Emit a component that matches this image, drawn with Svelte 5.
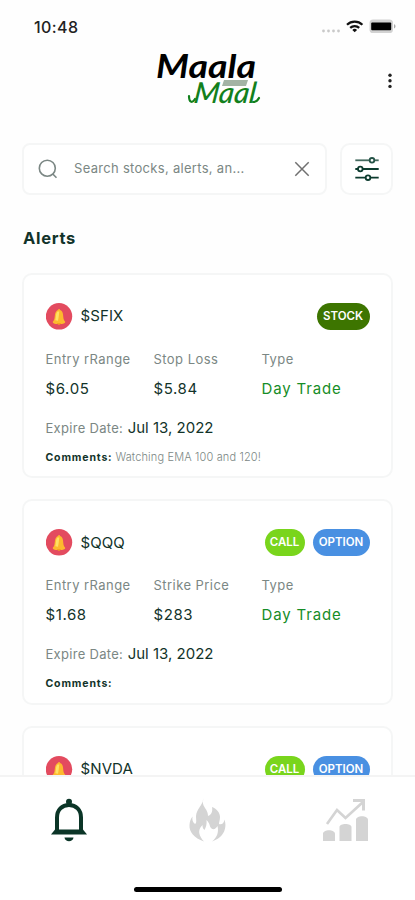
<script lang="ts">
	type Tag = 'stock' | 'call' | 'option';

	interface Alert {
		symbol: string;
		tags: Tag[];
		fields: { label: string; value: string; green?: boolean }[];
		expires: string;
		comments: string;
	}

	const alerts: Alert[] = [
		{
			symbol: '$SFIX',
			tags: ['stock'],
			fields: [
				{ label: 'Entry rRange', value: '$6.05' },
				{ label: 'Stop Loss', value: '$5.84' },
				{ label: 'Type', value: 'Day Trade', green: true }
			],
			expires: 'Jul 13, 2022',
			comments: 'Watching EMA 100 and 120!'
		},
		{
			symbol: '$QQQ',
			tags: ['call', 'option'],
			fields: [
				{ label: 'Entry rRange', value: '$1.68' },
				{ label: 'Strike Price', value: '$283' },
				{ label: 'Type', value: 'Day Trade', green: true }
			],
			expires: 'Jul 13, 2022',
			comments: ''
		},
		{
			symbol: '$NVDA',
			tags: ['call', 'option'],
			fields: [],
			expires: '',
			comments: ''
		}
	];
</script>

<div class="screen">
	<div class="status-bar">
		<span class="time">10:48</span>
		<svg class="status-icons" width="76" height="16" viewBox="0 0 76 16">
			<g fill="#c9c9c9">
				<circle cx="3.5" cy="12" r="1.4" />
				<circle cx="8.5" cy="12" r="1.4" />
				<circle cx="13.5" cy="12" r="1.4" />
				<circle cx="18.5" cy="12" r="1.4" />
			</g>
			<g fill="none" stroke="#111" stroke-width="2.2">
				<path d="M27 5.7a11 11 0 0 1 15.4 0" />
				<path d="M30.2 8.9a6.4 6.4 0 0 1 9 0" />
			</g>
			<path d="M34.7 13.2l-2.4-2.3a3.4 3.4 0 0 1 4.8 0z" fill="#111" />
			<rect x="49.5" y="0.5" width="23.5" height="13.5" rx="3.6" fill="#d2d2d2" />
			<rect x="51.2" y="3.4" width="20" height="7.8" rx="1" fill="#000" />
			<path d="M74 5.2c2 .6 2 3.6 0 4.2z" fill="#aaa" />
		</svg>
	</div>

	<header class="top">
		<svg class="logo" width="112" height="60" viewBox="0 0 112 60">
			<text class="logo-main" x="4" y="26" textLength="100" lengthAdjust="spacingAndGlyphs">Maala</text>
			<path d="M72 28h24l-2 6h-24z" fill="#a3b3a5" />
			<g transform="translate(37 50.5) skewX(-7)">
				<text class="logo-sub" x="4" y="0" textLength="62" lengthAdjust="spacingAndGlyphs">Maal</text>
			</g>
			<!-- swashes on both ends of the script line -->
			<g fill="none" stroke="#12801c" stroke-width="2.2" stroke-linecap="round">
				<path d="M37 44c0 6 3 8 6 3" />
				<path d="M101 50c3 0 5-2 6-4" />
			</g>
		</svg>
		<svg class="more" width="6" height="18" viewBox="0 0 6 18">
			<circle cx="3" cy="3.2" r="1.7" />
			<circle cx="3" cy="8.8" r="1.7" />
			<circle cx="3" cy="14.4" r="1.7" />
		</svg>
	</header>

	<div class="search-row">
		<div class="search">
			<svg width="20" height="20" viewBox="0 0 20 20" fill="none" stroke="#7b8784" stroke-width="1.6">
				<circle cx="9.3" cy="9.2" r="8" />
				<path d="M14.8 15l3.7 3.7" />
			</svg>
			<span class="placeholder">Search stocks, alerts, an...</span>
			<svg width="16" height="16" viewBox="0 0 16 16" fill="none" stroke="#707070" stroke-width="1.5">
				<path d="M1.3 1.3l13.4 13.4M14.7 1.3L1.3 14.7" />
			</svg>
		</div>
		<div class="filter">
			<svg width="26" height="26" viewBox="0 0 26 26" fill="#fff" stroke="#0c3b2e" stroke-width="1.8">
				<path d="M1.3 4.3h23.4" stroke="#456b60" />
				<path d="M1.3 13h23.4M1.3 21.7h23.4" />
				<circle cx="18" cy="4.3" r="2.3" stroke="#255347" />
				<circle cx="6.3" cy="13" r="2.3" />
				<circle cx="14" cy="21.7" r="2.3" />
			</svg>
		</div>
	</div>

	<h1>Alerts</h1>

	<main>
		{#each alerts as alert}
			<article class="card">
				<div class="card-head">
					<svg width="27" height="27" viewBox="0 0 27 27">
						<circle cx="13" cy="13.3" r="13.2" fill="#e34b5f" />
						<path d="M6.8 18.7c2-1.5 1.7-4.7 2.2-7.5.4-2.2 1.7-3.8 3-4.2.1-1.4 1.9-1.4 2 0 1.7.5 2.7 2.1 3 4.2.4 2.8.2 5.9 2.2 7.5.4 1.5-1.7 2-3.5 2.2l-2.4.1-3.5-.1c-1.5-.2-3.3-.7-3-2.2z" fill="#fdb92e" />
						<path d="M11.5 8.5c-1.7 1.5-1.5 5.5-2.2 8.7l2.7.5c.8-3.3.9-6.7 1.3-9.3z" fill="#ffe164" />
						<path d="M11 20c.4 2.4 3.6 2.4 4 0z" fill="#f5a11e" />
					</svg>
					<span class="symbol">{alert.symbol}</span>
					<div class="tags">
						{#each alert.tags as tag}
							<span class={`tag ${tag}`}>{tag.toUpperCase()}</span>
						{/each}
					</div>
				</div>
				{#if alert.fields.length}
					<dl class="fields">
						{#each alert.fields as field}
							<div>
								<dt>{field.label}</dt>
								<dd class:green={field.green}>{field.value}</dd>
							</div>
						{/each}
					</dl>
					<p class="expires"><span>Expire Date:</span> <strong>{alert.expires}</strong></p>
					<p class="comments"><strong>Comments:</strong> <span>{alert.comments}</span></p>
				{/if}
			</article>
		{/each}
	</main>

	<nav>
		<div class="tabs">
			<svg width="38" height="44" viewBox="0 0 38 44">
				<path d="M7 33V19.5C7 12 12 7 19 7s12 5 12 12.5V33" fill="none" stroke="#0b3527" stroke-width="4" />
				<circle cx="19" cy="3.7" r="3" fill="#0b3527" />
				<path d="M1 36.5l4-5h28l4 5z" fill="#0b3527" />
				<path d="M14.5 39.5h9c-.5 5-8.5 5-9 0z" fill="#0b3527" />
			</svg>
			<svg width="38" height="44" viewBox="0 0 38 44" fill="#d4d4d4">
				<path d="M14.5 0C13 4 14 7 16 10c2 3 3 5 3 8 3-1 5-4 4-9 5 2 8 6 8 10 0 3-1 5-1 7 3 1 5-1 5.5-4.5C38 29 36 39 23 43.5c5-4 7-9 5.5-15.5-1.500 3-4 4-6 2.500C20.500 29 21 25 17.500 22c.5 4-.5 7-2 10-1.500-1-2-3-2-5C8 32 10 38 15 43.500 5 40 0 34 .5 27c.2-3 1-6 3-8.500-.5 3 0 6 2.500 7.500 2-1 1-4 1-8C7.500 11 14 7 14.500 0z" />
			</svg>
			<svg width="48" height="44" viewBox="0 0 48 44" fill="#d4d4d4">
				<path d="M1 43V36c0-5 12-5 12 0v7zM17.5 43V29c0-4 12-4 12 0v14zM34 43V22c0-5 12-5 12 0v21z" />
				<path d="M5 26l10-14 8.5 8L41 4" fill="none" stroke="#d4d4d4" stroke-width="2.6" />
				<path d="M31 1h12v11.5h-3V4h-9z" />
			</svg>
		</div>
		<div class="home-indicator"></div>
	</nav>
</div>

<style>
	:global(body) {
		background: #fff;
	}

	.screen {
		display: flex;
		flex-direction: column;
		width: 415px;
		height: 900px;
		overflow: hidden;
		background: #fefefe;
		color: #12332a;
		font-family: Inter, 'Open Sans', sans-serif;
	}

	.status-bar {
		display: flex;
		justify-content: space-between;
		align-items: center;
		flex: none;
		height: 52px;
		padding: 2px 19px 0 34px;
		box-sizing: border-box;
	}

	.time {
		color: #222;
		font-size: 16px;
		font-weight: 500;
		letter-spacing: 0.4px;
	}

	.top {
		display: grid;
		grid-template-columns: 1fr 112px 1fr;
		flex: none;
		height: 91px;
	}

	.logo {
		grid-column: 2;
		overflow: visible;
	}

	.logo-main {
		fill: #000;
		font: italic 700 33px Lato, sans-serif;
	}

	.logo-sub {
		fill: #12801c;
		font: italic 500 29px Lato, sans-serif;
	}

	.more {
		justify-self: end;
		margin: 20px 22px 0 0;
		fill: #222;
	}

	.search-row {
		display: flex;
		flex: none;
		gap: 13px;
		height: 52px;
		padding: 0 22px;
	}

	.search,
	.filter {
		display: flex;
		align-items: center;
		box-sizing: border-box;
		border: 2px solid #f5f6f6;
		border-radius: 8px;
		background: #fff;
	}

	.search {
		flex: 1;
		padding: 0 15px 0 14px;
	}

	.placeholder {
		flex: 1;
		margin: -2px 0 0 16px;
		color: #7b8784;
		font-size: 13px;
		letter-spacing: 0.3px;
		white-space: nowrap;
	}

	.filter {
		justify-content: center;
		width: 53px;
		border-radius: 10px;
	}

	h1 {
		flex: none;
		margin: 31px 23px 22.5px;
		font-size: 16.5px;
		font-weight: 700;
		line-height: 24px;
		letter-spacing: 0.7px;
	}

	main {
		flex: 1;
		min-height: 0;
		overflow: hidden;
		padding: 0 22px;
	}

	.card {
		height: 205.5px;
		margin-bottom: 21px;
		padding: 28px 21.5px 0;
		box-sizing: border-box;
		border: 2px solid #f5f6f6;
		border-radius: 10px;
		background: #fff;
	}

	.card-head {
		display: flex;
		align-items: center;
		height: 27px;
	}

	.symbol {
		margin: -1px 0 0 8px;
		font-size: 15px;
		letter-spacing: 0.1px;
	}

	.tags {
		display: flex;
		gap: 8px;
		margin-left: auto;
	}

	.tag {
		width: 57px;
		border-radius: 14px;
		color: #fff;
		font-size: 11.5px;
		font-weight: 600;
		line-height: 27px;
		text-align: center;
	}

	.stock {
		width: 53px;
		background: #3d7500;
	}

	.call {
		width: 40px;
		background: #79d51c;
	}

	.option {
		background: #4990e2;
	}

	.fields {
		display: grid;
		grid-template-columns: repeat(3, 108px);
		margin: 19px 0 0;
	}

	dt {
		color: #7b8784;
		font-size: 13px;
		line-height: 20px;
		letter-spacing: 0.45px;
	}

	dd {
		margin: 8px 0 0;
		font-size: 15px;
		line-height: 24px;
		letter-spacing: 0.6px;
	}

	.green {
		color: #168d27;
		letter-spacing: 0.85px;
	}

	p {
		margin: 0;
		white-space: nowrap;
	}

	.expires {
		margin-top: 14px;
		line-height: 24px;
	}

	.expires span {
		color: #7b8784;
		font-size: 13px;
		letter-spacing: 0.3px;
	}

	.expires strong {
		font-size: 15px;
		font-weight: 400;
	}

	.comments {
		margin-top: 9px;
		font-size: 10.5px;
		line-height: 16px;
	}

	.comments strong {
		letter-spacing: 0.85px;
	}

	.comments span {
		color: #7b8784;
		font-weight: 300;
		font-size: 11px;
		letter-spacing: 0.15px;
	}

	nav {
		flex: none;
		height: 125.5px;
		border-top: 2px solid #f4f4f4;
		box-sizing: border-box;
		background: #fff;
	}

	.tabs {
		display: grid;
		grid-template-columns: repeat(3, 138.6px);
		justify-items: center;
		padding-top: 21px;
		height: 66px;
	}

	.home-indicator {
		width: 148px;
		height: 5px;
		margin: 23px auto 0;
		border-radius: 3px;
		background: #000;
	}
</style>
